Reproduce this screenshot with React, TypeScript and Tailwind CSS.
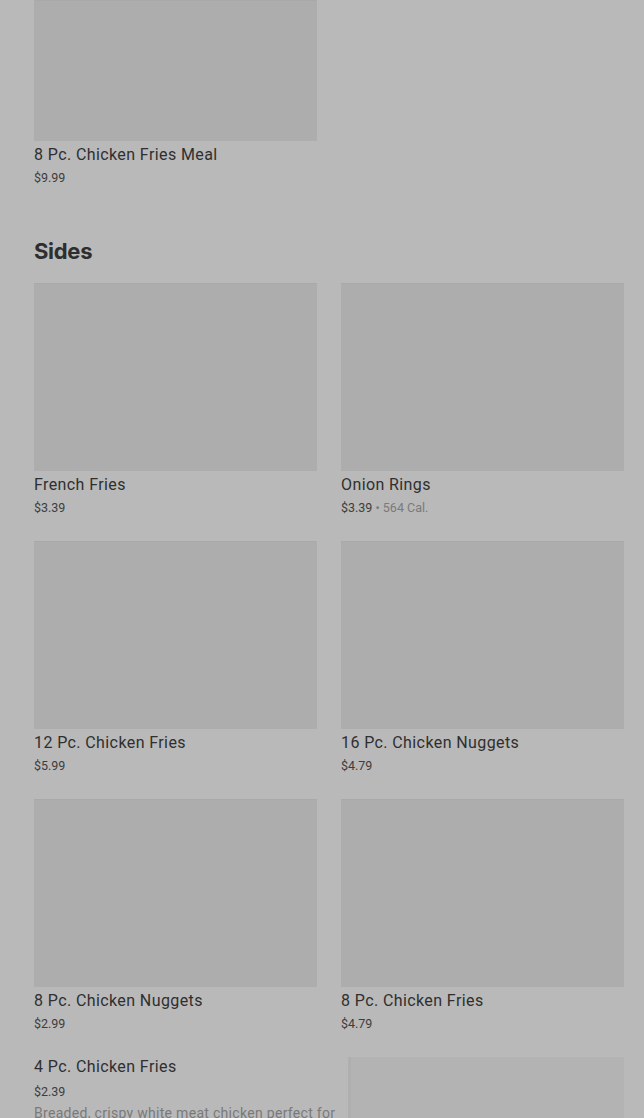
import React from "react";

type Item = { name: string; price: string; cal?: string };

const sides: Item[] = [
  { name: "French Fries", price: "$3.39" },
  { name: "Onion Rings", price: "$3.39", cal: "564 Cal." },
  { name: "12 Pc. Chicken Fries", price: "$5.99" },
  { name: "16 Pc. Chicken Nuggets", price: "$4.79" },
  { name: "8 Pc. Chicken Nuggets", price: "$2.99" },
  { name: "8 Pc. Chicken Fries", price: "$4.79" },
];

function Card({ item, imgH = "h-[188px]" }: { item: Item; imgH?: string }) {
  return (
    <div className="flex flex-col">
      <div className={`${imgH} w-full bg-[#adadad] border-t border-[#a9a9a9]`} />
      <div className="mt-[4px] text-[16px] leading-[20px] text-[#2f2f2f] tracking-[0.4px]">{item.name}</div>
      <div className="mt-[4px] text-[12.5px] leading-[18px] text-[#3d3d3d]">
        {item.price}
        {item.cal && <span className="text-[#7a7a7a]"> • {item.cal}</span>}
      </div>
    </div>
  );
}

export default function App() {
  return (
    <div
      className="w-full bg-[#b9b9b9] overflow-hidden pl-[34px] pr-[20px]"
      style={{ fontFamily: "Roboto, 'Liberation Sans', sans-serif", height: 1118 }}
    >
      <div className="w-[283px]">
        <Card item={{ name: "8 Pc. Chicken Fries Meal", price: "$9.99" }} imgH="h-[141px]" />
      </div>
      <h2
        className="mt-[50px] text-[22px] leading-[28px] font-bold text-[#2e2e2e]"
        style={{ fontFamily: "Inter, 'Liberation Sans', sans-serif", letterSpacing: "-0.3px" }}
      >
        Sides
      </h2>
      <div className="mt-[18px] grid grid-cols-2 gap-x-[24px] gap-y-[24px]">
        {sides.map((s) => (
          <Card key={s.name} item={s} />
        ))}
      </div>
      <div className="mt-[24px] flex gap-[14px]">
        <div className="w-[300px] flex flex-col">
          <div className="text-[16px] leading-[20px] text-[#2f2f2f] tracking-[0.4px]">4 Pc. Chicken Fries</div>
          <div className="mt-[6px] text-[12.5px] leading-[18px] text-[#3d3d3d]">$2.39</div>
          <div className="mt-[3px] text-[14px] leading-[18px] text-[#7a7a7a] whitespace-nowrap tracking-[0.3px]">
            Breaded, crispy white meat chicken perfect for
          </div>
        </div>
        <div className="flex-1 h-[120px] bg-[#b3b3b3] border-l-[3px] border-[#afafaf]" />
      </div>
    </div>
  );
}
